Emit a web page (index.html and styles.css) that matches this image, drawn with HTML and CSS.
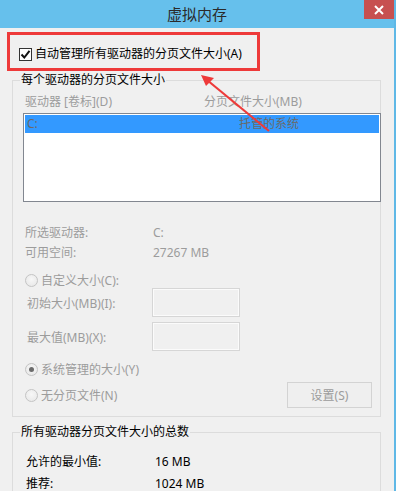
FILE: index.html
```html
<!DOCTYPE html>
<html lang="zh-CN">
<head>
<meta charset="utf-8">
<title>虚拟内存</title>
<link rel="stylesheet" href="styles.css">
</head>
<body>
<div class="window">
  <div class="titlebar">
    <span></span>
    <span class="title">虚拟内存</span>
    <span class="close-wrap"><span class="close"><svg width="10" height="10" viewBox="0 0 10 10"><path d="M1 1 L9 9 M9 1 L1 9" stroke="#fff" stroke-width="2"/></svg></span></span>
  </div>
  <div class="content">
    <div class="auto-row">
      <span class="checkbox"><svg width="11" height="11" viewBox="0 0 11 11"><path d="M1.5 5.5 L4.3 8.5 L9.5 1.8" fill="none" stroke="#111" stroke-width="2"/></svg></span>
      <span class="dark">自动管理所有驱动器的分页文件大小(A)</span>
    </div>

    <fieldset class="group group-main">
      <legend>每个驱动器的分页文件大小</legend>
      <div class="group-body main-body">
        <div class="list-head">
          <span>驱动器 [卷标](D)</span>
          <span>分页文件大小(MB)</span>
        </div>
        <div class="listbox">
          <div class="list-row">
            <span>C:</span>
            <span>托管的系统</span>
          </div>
        </div>
        <div class="info">
          <span>所选驱动器:</span><span>C:</span>
          <span>可用空间:</span><span>27267 MB</span>
        </div>
        <div class="radio-row first">
          <span class="radio"></span><span>自定义大小(C):</span>
        </div>
        <div class="size-row">
          <span>初始大小(MB)(I):</span><span class="textbox"></span>
        </div>
        <div class="size-row second">
          <span>最大值(MB)(X):</span><span class="textbox"></span>
        </div>
        <div class="radio-row sys">
          <span class="radio checked"></span><span>系统管理的大小(Y)</span>
        </div>
        <div class="last-row">
          <div class="radio-row inline">
            <span class="radio"></span><span>无分页文件(N)</span>
          </div>
          <span class="button">设置(S)</span>
        </div>
      </div>
    </fieldset>

    <fieldset class="group group-total">
      <legend>所有驱动器分页文件大小的总数</legend>
      <div class="group-body totals">
        <span>允许的最小值:</span><span>16 MB</span>
        <span>推荐:</span><span>1024 MB</span>
      </div>
    </fieldset>
  </div>

  <div class="highlight"></div>
  <svg class="arrow" width="90" height="70" viewBox="0 0 90 70">
    <path d="M70 58 L8 7" stroke="#ee3a3a" stroke-width="2.2" fill="none"/>
    <path d="M2 2 L15 5 L7 13 Z" fill="#ee3a3a"/>
  </svg>
</div>
</body>
</html>
```
FILE: styles.css
```css
* { box-sizing: border-box; }
html, body { margin: 0; padding: 0; }
body {
  width: 396px;
  height: 491px;
  overflow: hidden;
  font-family: "Noto Sans", "Noto Sans CJK SC", sans-serif;
  font-size: 12px;
  color: #9c9c9c;
}
.window {
  position: relative;
  width: 396px;
  height: 491px;
  background: #f0f0f0;
  border-right: 2px solid #5fb8e6;
  overflow: hidden;
}
.titlebar {
  height: 28px;
  background: #66c0ec;
  display: grid;
  grid-template-columns: 1fr auto 1fr;
  align-items: start;
}
.title {
  font-size: 15px;
  line-height: 28px;
  color: #2a2a2a;
}
.close-wrap { display: flex; justify-content: flex-end; }
.close {
  width: 30px;
  height: 19px;
  background: #c75050;
  display: flex;
  align-items: center;
  justify-content: center;
}
.close svg { display: block; }
.content { padding: 18px 0 0 0; }
.dark { color: #000; }
.auto-row {
  display: flex;
  align-items: center;
  height: 16px;
  line-height: 16px;
  padding-left: 19px;
  gap: 3px;
}
.checkbox {
  width: 13px;
  height: 13px;
  border: 1px solid #333;
  background: #fff;
  display: flex;
  align-items: center;
  justify-content: center;
}
.checkbox svg { display: block; }
.group {
  margin: 10px 0 0 12px;
  width: 369px;
  border: 1px solid #dcdcdc;
  padding: 0;
  min-width: 0;
}
.group legend {
  color: #000;
  line-height: 16px;
  padding: 0 1px;
  margin-left: 7px;
}
.main-body { padding: 6px 0 8px 10px; }
.list-head {
  display: grid;
  grid-template-columns: 179px 1fr;
  line-height: 16px;
  padding-left: 2px;
}
.listbox {
  margin-top: 3px;
  margin-right: -1px;
  height: 89px;
  border: 1px solid #828790;
  background: #fff;
  padding: 1px;
}
.list-row {
  height: 18px;
  background: #3399ff;
  display: grid;
  grid-template-columns: 212px 1fr;
  line-height: 18px;
  padding-left: 2px;
  color: #6a6a6a;
}
.info {
  display: grid;
  grid-template-columns: 128px 1fr;
  line-height: 20px;
  margin-top: 21px;
  padding-left: 2px;
}
.radio-row {
  display: flex;
  align-items: center;
  gap: 3px;
  height: 20px;
  padding-left: 2px;
}
.radio-row.first { margin-top: 7px; }
.radio-row.sys { margin-top: 8px; }
.radio {
  width: 13px;
  height: 13px;
  border-radius: 50%;
  border: 1px solid #c4c4c4;
  background: radial-gradient(circle at 50% 40%, #f7f7f7, #e6e6e6);
  display: flex;
  align-items: center;
  justify-content: center;
}
.radio.checked::after {
  content: "";
  width: 5px;
  height: 5px;
  border-radius: 50%;
  background: #6b6b6b;
}
.size-row {
  display: grid;
  grid-template-columns: 125px 88px;
  align-items: center;
  padding-left: 4px;
  margin-top: -2px;
}
.size-row.second { margin-top: 5px; }
.textbox {
  height: 29px;
  border: 1px solid #d6d6d6;
  box-shadow: inset 0 0 0 1px #fbfbfb;
  background: #f0f0f0;
}
.last-row {
  display: flex;
  justify-content: space-between;
  align-items: center;
  margin-top: 3px;
  padding-right: 8px;
}
.button {
  width: 85px;
  height: 26px;
  border: 1px solid #d3d3d3;
  background: #efefef;
  display: flex;
  align-items: center;
  justify-content: center;
}
.group-total {
  margin-top: 7px;
  height: 80px;
  border-bottom: none;
}
.totals {
  display: grid;
  grid-template-columns: 129px 1fr;
  line-height: 22px;
  color: #000;
  padding: 11px 0 0 13px;
}
.highlight {
  position: absolute;
  left: 7px;
  top: 32px;
  width: 253px;
  height: 39px;
  border: 3px solid #ee3a3a;
}
.arrow {
  position: absolute;
  left: 199px;
  top: 73px;
}
```
